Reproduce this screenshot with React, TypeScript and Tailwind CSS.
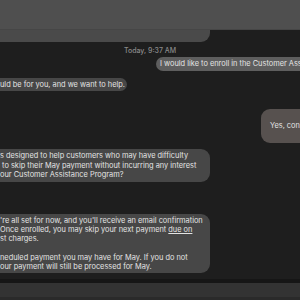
export default function App() {
  const font = { fontFamily: "Inter, 'Liberation Sans', sans-serif" };
  return (
    <div
      className="w-[300px] h-[300px] overflow-hidden bg-[#1e1e1e] flex flex-col text-[7.4px] text-[#e4e4e4]"
      style={font}
    >
      {/* header band over the earlier message */}
      <div className="h-[30px] shrink-0 bg-[#4f4f4f] border-b border-[#464646]" />
      <div className="h-[12px] w-[210px] shrink-0 bg-[#4a4a4a] rounded-br-[9px]" />

      <div className="mt-[4px] h-[10px] leading-[10px] text-center text-[#8a8a8a] text-[7px] font-medium">
        Today, 9:37 AM
      </div>

      <div className="mt-[1px] ml-[156px] h-[14px] shrink-0 rounded-l-full bg-[#5e5e5e] pl-[4px] leading-[14px] whitespace-nowrap overflow-hidden">
        I would like to enroll in the Customer Assistance Program.
      </div>

      <div className="mt-[7px] w-[127px] h-[13px] shrink-0 rounded-r-full bg-[#474747] leading-[13px] whitespace-nowrap overflow-hidden">
        uld be for you, and we want to help.
      </div>

      <div className="mt-[18px] ml-[261px] h-[34px] shrink-0 rounded-l-[9px] bg-[#57514f] pl-[9px] flex items-center whitespace-nowrap overflow-hidden">
        Yes, connect me
      </div>

      <div className="mt-[6px] w-[210px] shrink-0 rounded-r-[9px] bg-[#474747] py-[2px] leading-[9.5px] whitespace-pre overflow-hidden">
        <div>s designed to help customers who may have difficulty</div>
        <div> to skip their May payment without incurring any interest</div>
        <div>our Customer Assistance Program?</div>
      </div>

      <div className="mt-[32px] w-[210px] shrink-0 rounded-r-[9px] bg-[#474747] py-[2px] leading-[9.3px] whitespace-pre overflow-hidden">
        <div>'re all set for now, and you'll receive an email confirmation</div>
        <div>
          Once enrolled, you may skip your next payment <span className="underline">due on</span>
        </div>
        <div>st charges.</div>
        <div>&nbsp;</div>
        <div>neduled payment you may have for May. If you do not</div>
        <div>our payment will still be processed for May.</div>
      </div>

      <div className="mt-[6px] h-[4px] shrink-0 bg-[#161616]" />
      <div className="h-[14px] shrink-0 bg-[#333333]" />
      <div className="flex-1 bg-[#2a2a2a]" />
    </div>
  );
}
